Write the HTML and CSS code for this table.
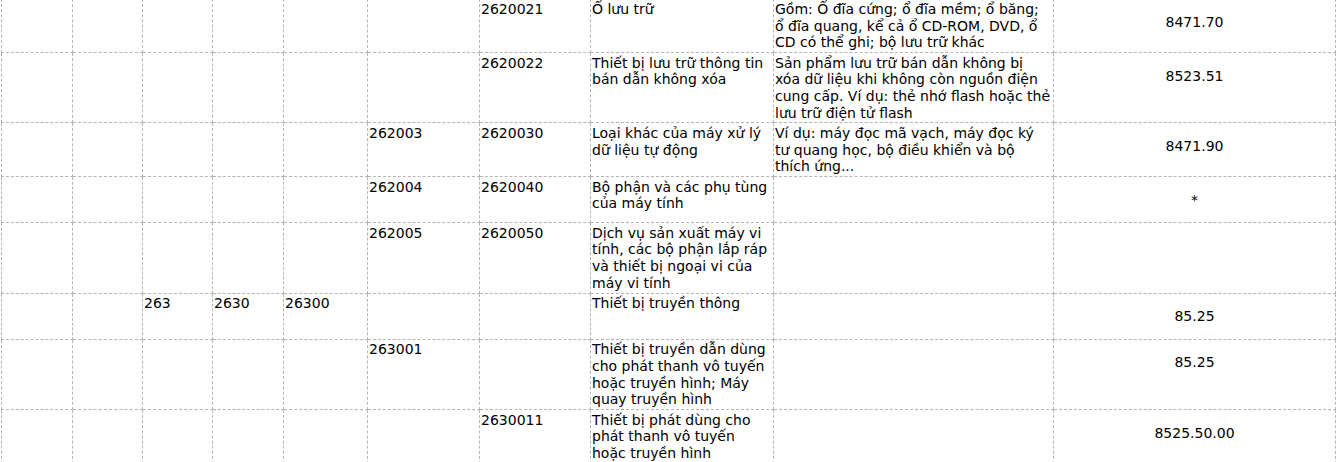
FILE: index.html
```html
<!DOCTYPE html>
<html lang="vi">
<head>
<meta charset="utf-8">
<title>Bảng mã</title>
<link rel="stylesheet" href="styles.css">
</head>
<body>
<table class="codes">
  <colgroup>
    <col class="c1"><col class="c2"><col class="c3"><col class="c4"><col class="c5">
    <col class="c6"><col class="c7"><col class="c8"><col class="c9"><col class="c10">
  </colgroup>
  <tr>
    <td></td><td></td><td></td><td></td><td></td><td></td>
    <td>2620021</td>
    <td class="txt">Ổ lưu trữ</td>
    <td class="txt">Gồm: Ổ đĩa cứng; ổ đĩa mềm; ổ băng;<br>ổ đĩa quang, kể cả ổ CD-ROM, DVD, ổ<br>CD có thể ghi; bộ lưu trữ khác</td>
    <td class="num"><p>8471.70</p></td>
  </tr>
  <tr>
    <td></td><td></td><td></td><td></td><td></td><td></td>
    <td>2620022</td>
    <td class="txt">Thiết bị lưu trữ thông tin<br>bán dẫn không xóa</td>
    <td class="txt">Sản phẩm lưu trữ bán dẫn không bị<br>xóa dữ liệu khi không còn nguồn điện<br>cung cấp. Ví dụ: thẻ nhớ flash hoặc thẻ<br>lưu trữ điện tử flash</td>
    <td class="num"><p>8523.51</p></td>
  </tr>
  <tr>
    <td></td><td></td><td></td><td></td><td></td>
    <td>262003</td>
    <td>2620030</td>
    <td class="txt">Loại khác của máy xử lý<br>dữ liệu tự động</td>
    <td class="txt">Ví dụ: máy đọc mã vạch, máy đọc ký<br>tư quang học, bộ điều khiển và bộ<br>thích ứng...</td>
    <td class="num"><p>8471.90</p></td>
  </tr>
  <tr>
    <td></td><td></td><td></td><td></td><td></td>
    <td>262004</td>
    <td>2620040</td>
    <td class="txt">Bộ phận và các phụ tùng<br>của máy tính</td>
    <td></td>
    <td class="num"><p>*</p></td>
  </tr>
  <tr>
    <td></td><td></td><td></td><td></td><td></td>
    <td>262005</td>
    <td>2620050</td>
    <td class="txt">Dịch vụ sản xuất máy vi<br>tính, các bộ phận lắp ráp<br>và thiết bị ngoại vi của<br>máy vi tính</td>
    <td></td>
    <td class="num"></td>
  </tr>
  <tr>
    <td></td><td></td>
    <td>263</td>
    <td>2630</td>
    <td>26300</td>
    <td></td>
    <td></td>
    <td class="txt">Thiết bị truyền thông</td>
    <td></td>
    <td class="num"><p>85.25</p></td>
  </tr>
  <tr>
    <td></td><td></td><td></td><td></td><td></td>
    <td>263001</td>
    <td></td>
    <td class="txt">Thiết bị truyền dẫn dùng<br>cho phát thanh vô tuyến<br>hoặc truyền hình; Máy<br>quay truyền hình</td>
    <td></td>
    <td class="num"><p>85.25</p></td>
  </tr>
  <tr>
    <td></td><td></td><td></td><td></td><td></td><td></td>
    <td>2630011</td>
    <td class="txt">Thiết bị phát dùng cho<br>phát thanh vô tuyến<br>hoặc truyền hình</td>
    <td></td>
    <td class="num"><p>8525.50.00</p></td>
  </tr>
</table>
</body>
</html>
```

FILE: styles.css
```css
html, body {
  margin: 0;
  padding: 0;
  background: #ffffff;
}

body {
  font-family: "DejaVu Sans", Verdana, sans-serif;
  font-size: 14px;
  line-height: 16.7px;
  color: #000000;
}

.codes {
  border-collapse: collapse;
  table-layout: fixed;
  width: 1334px;
  margin: -1.5px 0 0 1px;
}

.codes td {
  border: 1px dashed #b5b5b5;
  padding: 1.5px 1px 1px 1px;
  vertical-align: top;
  text-align: left;
}

.codes td.txt {
  white-space: nowrap;
}

.codes td.num {
  text-align: center;
}

.codes td.num p {
  margin: 13px 0;
}

.c1 { width: 71px; }
.c2 { width: 70px; }
.c3 { width: 70px; }
.c4 { width: 71px; }
.c5 { width: 84px; }
.c6 { width: 112px; }
.c7 { width: 111px; }
.c8 { width: 183px; }
.c9 { width: 280px; }
.c10 { width: 282px; }
```
